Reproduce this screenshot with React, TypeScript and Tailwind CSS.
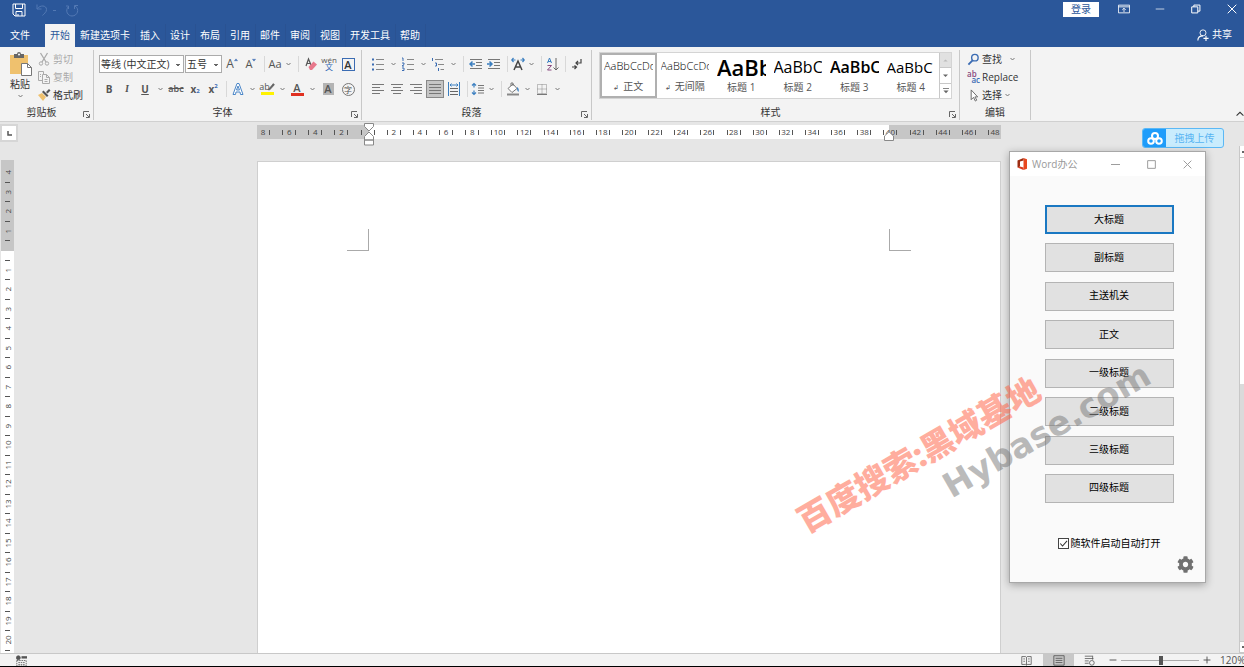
import React from "react";
import clsx from "clsx";
import { FaCog } from "react-icons/fa";

const tabs = [
  "开始",
  "新建选项卡",
  "插入",
  "设计",
  "布局",
  "引用",
  "邮件",
  "审阅",
  "视图",
  "开发工具",
  "帮助",
];

const styles = [
  { name: "正文", mark: true, preview: "AaBbCcDd", font: "text-[11px] font-light" },
  { name: "无间隔", mark: true, preview: "AaBbCcDd", font: "text-[11px] font-light" },
  { name: "标题 1", preview: "AaBbC", font: "text-[22px] font-semibold" },
  { name: "标题 2", preview: "AaBbC", font: "text-[16px]" },
  { name: "标题 3", preview: "AaBbC", font: "text-[16px] font-semibold" },
  { name: "标题 4", preview: "AaBbC", font: "text-[15px]" },
];

const headings = [
  "大标题",
  "副标题",
  "主送机关",
  "正文",
  "一级标题",
  "二级标题",
  "三级标题",
  "四级标题",
];

const horizontalMarks = Array.from({ length: 29 }, (_, i) => Math.abs(i * 2 - 8));
const verticalMarks = Array.from({ length: 25 }, (_, i) => Math.abs(i - 4));

type SvgProps = {
  children: React.ReactNode;
  size?: number;
  className?: string;
};

const Svg = ({ children, size = 14, className }: SvgProps) => (
  <svg
    width={size}
    height={size}
    viewBox="0 0 14 14"
    fill="none"
    stroke="currentColor"
    className={clsx("shrink-0", className)}
    aria-hidden="true"
  >
    {children}
  </svg>
);

const Chevron = () => (
  <svg width="5" height="4" viewBox="0 0 5 4" fill="none" stroke="#777" aria-hidden="true">
    <path d="M.5 1 2.5 3 4.5 1" />
  </svg>
);

const Drop = () => (
  <button className="flex h-5 w-3 items-center justify-center" aria-label="more">
    <Chevron />
  </button>
);

const Sep = () => (
  <span className="flex w-2 justify-center">
    <span className="h-4 w-px bg-[#d8d8d8]" />
  </span>
);

type ToolProps = {
  label: string;
  width?: string;
  className?: string;
  children: React.ReactNode;
};

const Tool = ({ label, width = "w-[18px]", className, children }: ToolProps) => (
  <button
    aria-label={label}
    className={clsx("flex h-[18px] items-center justify-center text-[#555]", width, className)}
  >
    {children}
  </button>
);

type GroupProps = {
  title: string;
  width: string;
  launcher?: boolean;
  children: React.ReactNode;
};

const Group = ({ title, width, launcher, children }: GroupProps) => (
  <section className={clsx("flex shrink-0 flex-col pt-[3px] pb-px", width)}>
    <div className="flex h-full flex-col border-r border-[#c8c8c8]">
      <div className="min-h-0 flex-1">{children}</div>
      <div className="flex h-4 items-center">
        <h2 className="flex-1 text-center leading-4">{title}</h2>
        {launcher && (
          <span className="flex w-[10px] pt-1">
            <button aria-label={title + " settings"}>
              <svg width="7" height="7" viewBox="0 0 7 7" fill="none" stroke="#666" aria-hidden="true">
                <path d="M.5 6V.5H6M3 3l3 3M6.500 3v3.500H3" />
              </svg>
            </button>
          </span>
        )}
      </div>
    </div>
  </section>
);

const Lines = ({ rows }: { rows: [number, number][] }) => (
  <Svg className="text-[#777]">
    {rows.map(([from, to], i) => (
      <path key={i} d={`M${from} ${2.5 + i * 3}H${to}`} />
    ))}
  </Svg>
);

const TitleBar = () => (
  <div className="flex h-[22px] items-center justify-between">
    <div className="flex h-5 items-center gap-[9px] self-start pl-3">
      <button aria-label="保存">
        <Svg>
          <path d="M1 1h12v12H3l-2-2zM3.500 1v4.500h7V1M4 13V8.500h6V13M6 11v2" />
        </Svg>
      </button>
      <button aria-label="撤消" className="flex items-center gap-1 text-[#5379b4]">
        <Svg>
          <path d="M2 1.500v4.500h4.500M2.500 5.500C5 2 11.500 2 11.500 6.500c0 3-2.500 4-4 6" />
        </Svg>
        <span className="h-px w-[3px] bg-[#5379b4]" />
      </button>
      <button aria-label="恢复" className="text-[#5379b4]">
        <Svg>
          <path d="M3.500 3.500C-.5 8 3 13 7 13c5.500 0 8-7 3-10M9.500 6V2.500H13M3.500 6V3H1" />
        </Svg>
      </button>
    </div>
    <div className="flex h-[18px] items-center self-start">
      <button className="mr-[7px] h-[15px] w-9 bg-white leading-[15px] text-[#2b579a]">登录</button>
      <button aria-label="功能区显示选项" className="flex w-9 justify-center">
        <Svg size={12}>
          <path d="M.5 2.500h13v9H.5zM.5 4.500h13M7 10.500v-4M5 8l2-2 2 2" />
        </Svg>
      </button>
      <button aria-label="最小化" className="flex w-9 justify-center">
        <Svg size={10}>
          <path d="M1 7h12" />
        </Svg>
      </button>
      <button aria-label="还原" className="flex w-9 justify-center">
        <Svg size={10}>
          <path d="M1 4h8.500v8.500H1zM4 4V1.500h8.500V10H9.500" strokeWidth="1.400" />
        </Svg>
      </button>
      <button aria-label="关闭" className="flex w-[30px] pl-[13px]">
        <Svg size={10}>
          <path d="m1 1 12 12M13 1 1 13" strokeWidth="1.400" />
        </Svg>
      </button>
    </div>
  </div>
);

const TabRow = () => (
  <nav className="flex h-[25px] items-end justify-between">
    <div className="flex">
      <button className="mr-[5px] h-[23px] px-[10px]">文件</button>
      {tabs.map((tab, i) => (
        <button
          key={tab}
          className={clsx(
            "h-[23px] px-[5px]",
            i === 0 ? "bg-[#f3f3f3] text-[#2b579a]" : "shadow-[1px_0_#2a5292]",
          )}
        >
          {tab}
        </button>
      ))}
    </div>
    <button className="flex h-[25px] items-center gap-[3px] pr-3">
      <Svg size={12}>
        <circle cx="7" cy="4.500" r="3.500" />
        <path d="M1 13.500C1 10 3.500 8 7 8M10.500 8v6M7.500 11h6" strokeWidth="1.300" />
      </Svg>
      共享
    </button>
  </nav>
);

const Clipboard = () => (
  <Group title="剪贴板" width="w-[94px]" launcher>
    <div className="flex pl-2">
      <button className="flex w-6 flex-col items-center pt-[2px]">
        <svg width="24" height="24" viewBox="0 0 24 24" aria-hidden="true">
          <path d="M2 3h18v19H2z" fill="#efc16e" />
          <path d="M6 2h3a2 2 0 0 1 4 0h3v4H6z" fill="#666" />
          <circle cx="11" cy="2.500" r="1" fill="#fff" />
          <path d="M13.500 11.500h6l4 4v8h-10z" fill="#fff" stroke="#777" />
          <path d="M19.500 11.500v4h4" fill="none" stroke="#777" />
        </svg>
        <span className="leading-4">粘贴</span>
        <span className="flex h-2 items-center">
          <Chevron />
        </span>
      </button>
      <div className="flex flex-col pl-[5px]">
        <button className="flex h-[18px] items-center gap-[2px] text-[#aaa]">
          <Svg>
            <path d="M3.500 1 9 10M10.500 1 5 10" strokeWidth="1.300" />
            <circle cx="4" cy="11.500" r="1.700" />
            <circle cx="10" cy="11.500" r="1.700" />
          </Svg>
          剪切
        </button>
        <button className="flex h-[18px] items-center gap-[2px] text-[#aaa]">
          <Svg>
            <path d="M5 10.500H1.500v-9h5V4M5.500 4.500h4l3 3v6h-7zM9.500 4.500v3h3M7.500 9.500h3M7.500 11.500h3M3 4.500h1M3 6.500h1" />
          </Svg>
          复制
        </button>
        <button className="flex h-[18px] items-center gap-[2px]">
          <Svg>
            <path d="m1 7 4-2 4 4-3 4z" fill="#efc16e" stroke="none" />
            <path d="m5 4 5 5 1.500-1.500L6.500 2.500zM9 4l3-3 1.500 1.500-3 3z" fill="#555" stroke="none" />
          </Svg>
          格式刷
        </button>
      </div>
    </div>
  </Group>
);

const FontGroup = () => (
  <Group title="字体" width="w-[268px]" launcher>
    <div className="flex flex-col gap-[7px] pt-[5px] pl-[5px]">
      <div className="flex h-[18px] items-center">
        <select
          aria-label="字体"
          className="mr-px h-[18px] w-[85px] appearance-none border border-[#ababab] bg-white bg-[linear-gradient(#666,#666),linear-gradient(#666,#666)] bg-[length:4px_1px,2px_2px] bg-[position:right_3px_center,right_4px_top_8px] bg-no-repeat pl-px"
        >
          <option>等线 (中文正文)</option>
        </select>
        <select
          aria-label="字号"
          className="h-[18px] w-[37px] appearance-none border border-[#ababab] bg-white bg-[linear-gradient(#666,#666),linear-gradient(#666,#666)] bg-[length:4px_1px,2px_2px] bg-[position:right_3px_center,right_4px_top_8px] bg-no-repeat pl-px"
        >
          <option>五号</option>
        </select>
        <Tool label="增大字号" width="w-5" className="text-[12px]">
          A<Svg size={4} className="mb-2"><path d="M1 10 7 3l6 7z" fill="#3b6cb3" stroke="#3b6cb3" /></Svg>
        </Tool>
        <Tool label="减小字号" className="text-[11px]">
          A<Svg size={4} className="mb-2"><path d="m1 4 6 7 6-7z" fill="#3b6cb3" stroke="#3b6cb3" /></Svg>
        </Tool>
        <Sep />
        <Tool label="更改大小写" width="w-[14px]" className="text-[11px]">Aa</Tool>
        <Drop />
        <Sep />
        <Tool label="清除所有格式">
          <Svg>
            <path d="M2 9 4.500 2 7 8M3 6.500h3" strokeWidth="1.200" />
            <path d="m4.500 10 5-5.500 3.500 3-5 5.500H6z" fill="#e8788c" stroke="none" />
          </Svg>
        </Tool>
        <Tool label="拼音指南" className="flex-col">
          <span className="h-[6px] text-[8px] leading-[6px]">wén</span>
          <span className="h-2 text-[8px] leading-2 text-[#2f66b3]">文</span>
        </Tool>
        <Tool label="字符边框" width="w-5">
          <span className="size-[13px] border border-[#3b6cb3] text-center text-[11px] leading-[11px] font-semibold text-[#333]">A</span>
        </Tool>
      </div>
      <div className="flex h-[18px] items-center pl-px">
        <Tool label="加粗" className="font-bold text-[#333]">B</Tool>
        <Tool label="倾斜" className="font-serif font-bold italic">I</Tool>
        <Tool label="下划线" className="font-bold underline">U</Tool>
        <Drop />
        <Tool label="删除线" width="w-5" className="text-[9px] font-semibold line-through">abc</Tool>
        <Tool label="下标" className="font-bold">
          x<sub className="text-[6px] text-[#3b6cb3]">2</sub>
        </Tool>
        <Tool label="上标" className="font-bold">
          x<sup className="text-[6px] text-[#3b6cb3]">2</sup>
        </Tool>
        <Sep />
        <Tool label="文本效果" width="w-4">
          <Svg>
            <path d="M2 12.500 6 1.500h2l4 11H9.500L9 10H5l-.5 2.500zM5.500 8h3L7 4z" stroke="#4a86c8" fill="#fff" />
          </Svg>
        </Tool>
        <Drop />
        <Tool label="突出显示" className="flex-col text-[9px] leading-[8px]">
          <span className="flex">
            ab
            <Svg size={8} className="-ml-[3px]"><path d="m2 12 9-11 2 2-8 9z" fill="#666" /></Svg>
          </span>
          <span className="mt-px h-[3px] w-[13px] bg-[#fff200]" />
        </Tool>
        <Drop />
        <Tool label="字体颜色" className="flex-col text-[11px] leading-[10px] font-semibold">
          A<span className="h-[3px] w-[13px] bg-[#e03020]" />
        </Tool>
        <Drop />
        <Tool label="字符底纹" width="w-5">
          <span className="h-3 w-[11px] bg-[#b4b4b4] text-center text-[11px] leading-3 font-semibold">A</span>
        </Tool>
        <Tool label="带圈字符" width="w-5">
          <span className="size-[13px] rounded-full border border-[#777] text-center text-[8px] leading-[11px]">字</span>
        </Tool>
      </div>
    </div>
  </Group>
);

const Paragraph = () => (
  <Group title="段落" width="w-[230px]" launcher>
    <div className="flex flex-col gap-[7px] pt-[5px] pl-[7px]">
      <div className="flex h-[18px] items-center">
        <Tool label="项目符号">
          <Svg>
            <path d="M5 2.500h8M5 7.500h8M5 12.500h8" stroke="#888" />
            <path d="M1 2.500h2M1 7.500h2M1 12.500h2" stroke="#3b6cb3" strokeWidth="2" />
          </Svg>
        </Tool>
        <Drop />
        <Tool label="编号">
          <Svg>
            <path d="M6 2.500h7M6 7.500h7M6 12.500h7" stroke="#888" />
            <path d="M1 1h1v3M1 6h2v1.500L1 9h2M1 11h2v2.500H1" stroke="#3b6cb3" />
          </Svg>
        </Tool>
        <Drop />
        <Tool label="多级列表">
          <Svg>
            <path d="M4 2.500h8M7 7.500h6M9.500 12.500H13" stroke="#888" />
            <path d="M1.500 1v3M4 6h1.500v3H4M7.500 11v3" stroke="#3b6cb3" />
          </Svg>
        </Tool>
        <Drop />
        <Sep />
        <Tool label="减少缩进量">
          <Svg>
            <path d="M1 2.500h12M7 5.500h6M7 8.500h6M1 11.500h12" stroke="#777" />
            <path d="M6 7H1M3.500 4.500 1 7l2.500 2.500" stroke="#3b7fc0" strokeWidth="1.500" />
          </Svg>
        </Tool>
        <Tool label="增加缩进量">
          <Svg>
            <path d="M1 2.500h12M7 5.500h6M7 8.500h6M1 11.500h12" stroke="#777" />
            <path d="M0 7h5M2.500 4.500 5 7 2.500 9.500" stroke="#3b7fc0" strokeWidth="1.500" />
          </Svg>
        </Tool>
        <Sep />
        <Tool label="中文版式" width="w-[14px]">
          <Svg>
            <path d="M3 13 7 4l4 9M4.500 10h5" stroke="#444" strokeWidth="1.500" />
            <path d="M4.500 3H1M2.500 1 .8 3l1.700 2M9.500 3H13M11.500 1l1.700 2-1.700 2" stroke="#3b7fc0" strokeWidth="1.200" />
          </Svg>
        </Tool>
        <Drop />
        <Sep />
        <Tool label="排序" width="w-4">
          <Svg>
            <path d="M1.500 6 3.500 1l2 5M2 4.500h3" stroke="#3b7fc0" />
            <path d="M1.500 8.500h4l-4 4.500h4" stroke="#8a4a80" />
            <path d="M10 1v12M7.500 10.500 10 13l2.500-2.500" stroke="#666" />
          </Svg>
        </Tool>
        <Sep />
        <Tool label="显示编辑标记" width="w-4">
          <Svg>
            <path d="M11 2v4H6M8 4 6 6l2 2M2 10h4M4.500 8.500l2 1.500-2 2" stroke="#444" strokeWidth="1.200" />
          </Svg>
        </Tool>
      </div>
      <div className="flex h-[18px] items-center">
        <Tool label="左对齐"><Lines rows={[[1, 13], [1, 9], [1, 13], [1, 9]]} /></Tool>
        <Tool label="居中" width="w-5"><Lines rows={[[1, 13], [3, 11], [1, 13], [3, 11]]} /></Tool>
        <Tool label="右对齐"><Lines rows={[[1, 13], [5, 13], [1, 13], [5, 13]]} /></Tool>
        <Tool label="两端对齐" width="w-5">
          <span className="border border-[#888] bg-[#c5c5c5] p-px">
            <Lines rows={[[1, 13], [1, 13], [1, 13], [1, 13]]} />
          </span>
        </Tool>
        <Tool label="分散对齐">
          <Svg>
            <path d="M1.500 0v14M12.500 0v14M3 3h8M4.500 1.500 3 3l1.500 1.500M9.500 1.500 11 3 9.500 4.500" stroke="#3b7fc0" />
            <path d="M3 6.500h8M3 9.500h8M3 12.500h8" stroke="#666" />
          </Svg>
        </Tool>
        <Sep />
        <Tool label="行距" width="w-[14px]">
          <Svg>
            <path d="M3 1.500v4M1 3.500l2-2 2 2M3 8.500v4M1 10.500l2 2 2-2" stroke="#3b7fc0" strokeWidth="1.200" />
            <path d="M7 3.500h6M7 6h6M7 8.500h6M7 11h6" stroke="#777" />
          </Svg>
        </Tool>
        <Drop />
        <Sep />
        <Tool label="底纹" width="w-4">
          <Svg>
            <path d="m2 6.500 5-4.500 4 4.500-5 4zM5 4V1h2v3" stroke="#777" fill="#fff" />
            <path d="M11 5c2 1 2 3 1.500 5C11 9 11 7 11 5z" fill="#3b7fc0" stroke="none" />
            <path d="M1 12.500h12" stroke="#888" strokeWidth="2" />
          </Svg>
        </Tool>
        <Drop />
        <Tool label="边框">
          <Svg>
            <path d="M2.500 2.500h9v9h-9zM7 2.500v9M2.500 7h9" stroke="#888" strokeDasharray="1 1" />
            <path d="M2 12.500h10" stroke="#777" />
          </Svg>
        </Tool>
        <Drop />
      </div>
    </div>
  </Group>
);

const StylesGroup = () => (
  <Group title="样式" width="w-[368px]" launcher>
    <div className="flex pt-[2px] pl-[7px]">
      <div className="flex h-[47px] w-[353px] border border-[#d4d4d4] bg-white">
        {styles.map((style, i) => (
          <button
            key={style.name}
            className={clsx(
              "flex min-w-0 flex-1 flex-col border-2 px-[2px]",
              i === 0 ? "border-[#b0b0b0]" : "border-transparent",
            )}
          >
            <span
              className={clsx(
                "flex h-6 w-full items-center overflow-hidden whitespace-nowrap text-black",
                style.font,
              )}
            >
              {style.preview}
            </span>
            <span className="w-full text-center leading-4 text-[#555]">
              {style.mark && <span className="mr-1 text-[7px]">↲</span>}
              {style.name}
            </span>
          </button>
        ))}
        <div className="flex w-3 flex-col divide-y divide-[#c8c8c8] border-l border-[#c8c8c8]">
          <button aria-label="上一行" className="flex flex-1 items-center justify-center bg-[#e1e1e1]">
            <Svg size={5}><path d="m1 10 6-6 6 6z" fill="#bbb" stroke="none" /></Svg>
          </button>
          <button aria-label="下一行" className="flex flex-1 items-center justify-center">
            <Svg size={5}><path d="m0 4 7 7 7-7z" fill="#666" stroke="none" /></Svg>
          </button>
          <button aria-label="其他" className="flex flex-1 items-center justify-center">
            <Svg size={6}><path d="M0 1h14" strokeWidth="2" stroke="#666" /><path d="m1 6 6 6 6-6z" fill="#666" stroke="none" /></Svg>
          </button>
        </div>
      </div>
    </div>
  </Group>
);

const Editing = () => (
  <Group title="编辑" width="w-[71px]">
    <div className="flex flex-col pl-[7px]">
      <button className="flex h-[18px] items-center gap-[2px]">
        <Svg size={13}>
          <circle cx="8.500" cy="5" r="3.500" stroke="#3b6cb3" strokeWidth="1.500" />
          <path d="m6 8-4.500 4.500" stroke="#3b6cb3" strokeWidth="2" />
        </Svg>
        <span className="mr-[6px]">查找</span>
        <Chevron />
      </button>
      <button className="flex h-[18px] items-center gap-[2px]">
        <span className="flex w-[13px] flex-col text-[8px] leading-[6px] font-semibold">
          <span className="text-left text-[#8a4a80]">ab</span>
          <span className="text-right text-[#3b6cb3]">ac</span>
        </span>
        Replace
      </button>
      <button className="flex h-[18px] items-center gap-[2px]">
        <Svg size={13}>
          <path d="M4.500 1v10.500l2.500-2.500 2 4 1.500-1-2-3.500h3z" stroke="#666" fill="#fff" />
        </Svg>
        <span className="mr-px">选择</span>
        <Chevron />
      </button>
    </div>
  </Group>
);

const HorizontalRuler = () => (
  <div className="relative mt-[3px] w-[744px] shrink-0">
    <div className="h-[14px] overflow-hidden bg-[linear-gradient(90deg,#c6c6c6_15%,#fff_15%,#fff_85%,#c6c6c6_85%)]">
      <div className="-mx-[7px] flex h-full items-center text-[8px] text-[#444]">
        {horizontalMarks.map((mark, i) => (
          <div key={i} className="flex flex-1 items-center justify-center">
            <span className="h-[5px] w-px bg-[#555]" />
            <span className="w-3 text-center leading-[14px]">{mark || ""}</span>
            <span className="h-[5px] w-px bg-[#555]" />
          </div>
        ))}
      </div>
    </div>
    <svg className="absolute -top-[2px] left-[15%] -ml-[5px]" width="10" height="23" viewBox="0 0 10 23" fill="#fff" stroke="#888" aria-hidden="true">
      <path d="M.5.500h9v3L5 8 .5 3.500zM5 9l4.500 4.500V17h-9v-3.500zM.5 17h9v5h-9z" />
    </svg>
    <svg className="absolute top-[6px] right-[15%] -mr-[5px]" width="10" height="10" viewBox="0 0 10 10" fill="#fff" stroke="#888" aria-hidden="true">
      <path d="M5 .800 9.500 5v4.500h-9V5z" />
    </svg>
  </div>
);

const VerticalRuler = () => (
  <div className="flex w-4 shrink-0 flex-col">
    <button aria-label="制表符" className="mt-[2px] flex h-[18px] w-[18px] items-center justify-center border-2 border-[#d6d6d6] bg-white">
      <svg width="5" height="5" viewBox="0 0 5 5" fill="none" stroke="#555" strokeWidth="1.500" aria-hidden="true">
        <path d="M1 0v4h4" />
      </svg>
    </button>
    <div className="mt-[18px] ml-px flex w-[13px] flex-1 flex-col bg-[linear-gradient(#c6c6c6_91px,#fff_91px)] pt-[3px] pb-[2px] text-[8px] text-[#444]">
      {verticalMarks.map((mark, i) => (
        <div key={i} className="flex min-h-0 flex-1 flex-col items-center">
          <span className="flex min-h-0 flex-1 rotate-180 items-center justify-center leading-3 [writing-mode:vertical-rl]">
            <span className="leading-3">{mark || ""}</span>
          </span>
          <span className="h-px w-[5px] bg-[#555]" />
        </div>
      ))}
    </div>
  </div>
);

const Workspace = () => (
  <main className="flex min-h-0 flex-1 bg-[#e6e6e6]">
    <VerticalRuler />
    <div className="flex min-w-0 flex-1 flex-col items-center pl-[3px]">
      <HorizontalRuler />
      <div className="mt-[22px] w-[744px] flex-1 border-x border-t border-[#cfcfcf] bg-white pt-[67px]">
        <div className="flex justify-between px-[12%]">
          <span className="size-[22px] border-r border-b border-[#aaa]" />
          <span className="size-[22px] border-b border-l border-[#aaa]" />
        </div>
      </div>
    </div>
    <div className="mt-6 flex w-[5px] shrink-0 flex-col border-l border-[#c8c8c8] bg-[#dadada]">
      <button aria-label="向上滚动" className="flex h-3 items-center justify-end border-b border-[#c8c8c8] bg-white">
        <span className="size-[2px] bg-[#666]" />
      </button>
      <div className="h-[226px] bg-white" />
      <div className="flex-1" />
      <button aria-label="向下滚动" className="flex h-3 items-center justify-end border-y border-[#c8c8c8] bg-white">
        <span className="size-[2px] bg-[#666]" />
      </button>
    </div>
  </main>
);

const StatusBar = () => (
  <footer className="flex h-[14px] shrink-0 items-center justify-between overflow-hidden border-t border-b border-t-[#c8c8c8] border-b-black bg-[#f3f3f3] text-[#555]">
    <Svg size={11} className="ml-4">
      <circle cx="3" cy="3.500" r="2.500" fill="#555" />
      <path d="M7 3h7" strokeWidth="3" />
      <path d="M1 7h12v7H1zM3 9.500h8M3 12h8" strokeDasharray="2 1" />
    </Svg>
    <div className="flex h-full items-center">
      <button aria-label="阅读视图" className="flex w-[34px] justify-center">
        <Svg size={11}>
          <path d="M1 2h5l1 1 1-1h5v10H8l-1 1-1-1H1zM7 3v10M3 5h2M3 8h2M9 5h2M9 8h2" />
        </Svg>
      </button>
      <button aria-label="页面视图" className="flex h-full w-[31px] items-center justify-center bg-[#c8c8c8]">
        <Svg size={12}>
          <path d="M1 2h12v11H1zM3 5h8M3 7.500h8M3 10h8" />
        </Svg>
      </button>
      <button aria-label="Web 版式视图" className="flex w-[31px] justify-center">
        <Svg size={11}>
          <path d="M1 1.500h10M1 4.500h11M1 7.500h5M1 10.500h5M11 1v5" />
          <circle cx="10" cy="10" r="3" />
        </Svg>
      </button>
      <button aria-label="缩小" className="flex w-4 justify-center">
        <Svg size={8}><path d="M1 7h12" strokeWidth="1.700" /></Svg>
      </button>
      <input
        type="range"
        aria-label="缩放"
        min={0}
        max={100}
        defaultValue={52}
        className="h-3 w-[78px] appearance-none bg-[linear-gradient(#aaa,#aaa)] bg-[length:100%_1px] bg-center bg-no-repeat [&::-webkit-slider-thumb]:h-[9px] [&::-webkit-slider-thumb]:w-1 [&::-webkit-slider-thumb]:appearance-none [&::-webkit-slider-thumb]:bg-[#555]"
      />
      <button aria-label="放大" className="flex w-4 justify-center">
        <Svg size={8}><path d="M1 7h12M7 1v12" strokeWidth="1.700" /></Svg>
      </button>
      <span className="w-[29px] pl-[5px] text-[10px] leading-3">120%</span>
    </div>
  </footer>
);

const UploadBadge = () => (
  <button className="absolute top-[128px] right-5 flex h-5 w-[82px] items-center overflow-hidden rounded-[3px] border border-[#5bb8f5] bg-[#c9ecfd] text-[#57b4f2]">
    <span className="flex h-full w-[23px] items-center justify-center bg-[#1f9dfb]">
      <svg width="16" height="13" viewBox="0 0 16 13" fill="none" stroke="#fff" strokeWidth="2" aria-hidden="true">
        <circle cx="8" cy="4" r="3" />
        <circle cx="4" cy="9" r="2.800" />
        <circle cx="12" cy="9" r="2.800" />
      </svg>
    </span>
    <span className="flex-1 text-center">拖拽上传</span>
  </button>
);

const MacroWindow = () => (
  <aside className="absolute top-[151px] right-[38px] w-[197px] border border-[#a8a8a8] bg-[#fafafa] text-black shadow-[0_2px_8px_rgba(0,0,0,0.3)]">
    <header className="flex h-6 items-center justify-between bg-white pl-[6px] text-[#999]">
      <div className="flex items-center gap-1">
        <svg width="12" height="14" viewBox="0 0 12 14" aria-hidden="true">
          <path d="M7.500 1 11 2.200v9.600L7.500 13z" fill="#e8481f" />
          <path d="M1.500 3.500 7.500 1v2.500L4 4.500v5L1.500 10.500z" fill="#9c2d12" />
          <path d="M1.500 10.500 4 9.500l3.500 1V13z" fill="#d83b1e" />
        </svg>
        <h1 className="text-[10px] leading-4">Word办公</h1>
      </div>
      <div className="flex">
        <button aria-label="最小化" className="flex w-9 justify-center">
          <Svg size={9}><path d="M0 7h14" strokeWidth="1.500" /></Svg>
        </button>
        <button aria-label="最大化" className="flex w-9 justify-center">
          <Svg size={9}><path d="M1 1h12v12H1z" strokeWidth="1.500" /></Svg>
        </button>
        <button aria-label="关闭" className="flex w-9 justify-center">
          <Svg size={9}><path d="m1 1 12 12M13 1 1 13" strokeWidth="1.500" /></Svg>
        </button>
      </div>
    </header>
    <div className="flex flex-col items-center pt-[29px] pl-[3px]">
      <div className="flex h-[298px] w-[129px] flex-col justify-between">
        {headings.map((heading, i) => (
          <button
            key={heading}
            className={clsx(
              "h-[29px] bg-[#e1e1e1] pb-px",
              i === 0 ? "border-2 border-[#1a78c2]" : "border border-[#b4b4b4]",
            )}
          >
            {heading}
          </button>
        ))}
      </div>
      <label className="mt-8 flex h-4 items-center gap-[2px]">
        <span className="relative flex">
          <input
            type="checkbox"
            defaultChecked
            className="peer size-[11px] appearance-none border border-[#444] bg-white"
          />
          <Svg size={9} className="pointer-events-none absolute top-px left-px hidden text-[#333] peer-checked:block">
            <path d="m2 7 3.500 4L12.500 3" strokeWidth="1.600" />
          </Svg>
        </span>
        随软件启动自动打开
      </label>
    </div>
    <div className="flex justify-end pt-[5px] pr-[11px] pb-[9px]">
      <button aria-label="设置" className="text-[#707070]">
        <FaCog size={17} />
      </button>
    </div>
  </aside>
);

const Watermark = () => (
  <div className="pointer-events-none font-bold whitespace-nowrap" aria-hidden="true">
    <span className="absolute top-[435px] right-[188px] -rotate-30 text-[33px] leading-10 font-black text-[#ff5a3c]/50">
      百度搜索:黑域基地
    </span>
    <span className="absolute top-[410px] right-[81px] -rotate-30 font-['DejaVu_Sans',sans-serif] text-[34px] leading-10 text-[#777]/50">
      Hybase.com
    </span>
  </div>
);

export default function App() {
  return (
    <div className="relative flex h-screen flex-col overflow-hidden font-['Open_Sans','Noto_Sans_CJK_SC',sans-serif] text-[10px] text-[#333]">
      <header className="shrink-0 bg-[#2b579a] text-white">
        <TitleBar />
        <TabRow />
      </header>
      <div className="flex h-[75px] shrink-0 border-b border-[#d0d0d0] bg-[#f3f3f3]">
        <Clipboard />
        <FontGroup />
        <Paragraph />
        <StylesGroup />
        <Editing />
        <button aria-label="折叠功能区" className="ml-auto self-end pb-[3px]">
          <Svg size={8}><path d="m1 10 6-6 6 6" strokeWidth="1.800" /></Svg>
        </button>
      </div>
      <Workspace />
      <StatusBar />
      <UploadBadge />
      <MacroWindow />
      <Watermark />
    </div>
  );
}
